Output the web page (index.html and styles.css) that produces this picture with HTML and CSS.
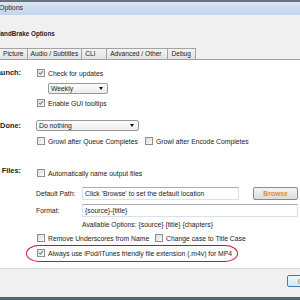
FILE: index.html
```html
<!DOCTYPE html>
<html lang="en">
<head>
    <meta charset="UTF-8">
    <title>HandBrake Options</title>
    <link rel="stylesheet" href="styles.css">
</head>
<body>
    <div class="window">
        <div class="titlebar"><span class="title">Options</span></div>

        <div class="header">
            <h1 class="header-title">HandBrake Options</h1>
        </div>

        <div class="tabs">
            <div class="tab tab-general">General</div>
            <div class="tab">Picture</div>
            <div class="tab">Audio / Subtitles</div>
            <div class="tab">CLI</div>
            <div class="tab">Advanced / Other</div>
            <div class="tab tab-debug">Debug</div>
        </div>

        <div class="panel">
            <div class="group">
                <div class="group-label">Launch:</div>
                <div class="group-body">
                    <label class="check">
                        <span class="box"><svg viewBox="0 0 8 8"><path d="M1.6 3.8 L3.2 5.8 L6.4 1.6"/></svg></span>
                        Check for updates
                    </label>
                    <div class="select select-weekly">Weekly<span class="arrow"></span></div>
                    <label class="check check-gap">
                        <span class="box"><svg viewBox="0 0 8 8"><path d="M1.6 3.8 L3.2 5.8 L6.4 1.6"/></svg></span>
                        Enable GUI tooltips
                    </label>
                </div>
            </div>

            <div class="group group-done">
                <div class="group-label label-select">When Done:</div>
                <div class="group-body">
                    <div class="select select-done">Do nothing<span class="arrow"></span></div>
                    <div class="check-row growl-row">
                        <label class="check check-first"><span class="box"></span>Growl after Queue Completes</label>
                        <label class="check"><span class="box"></span>Growl after Encode Completes</label>
                    </div>
                </div>
            </div>

            <div class="group group-files">
                <div class="group-label label-files">Output Files:</div>
                <div class="group-body">
                    <label class="check"><span class="box"></span>Automatically name output files</label>

                    <div class="field-row path-row">
                        <span class="field-label">Default Path:</span>
                        <div class="textbox textbox-path">Click 'Browse' to set the default location</div>
                        <button class="browse">Browse</button>
                    </div>
                    <div class="field-row format-row">
                        <span class="field-label">Format:</span>
                        <div class="textbox">{source}-{title}</div>
                    </div>
                    <div class="hint">Available Options: {source} {title} {chapters}</div>

                    <div class="check-row remove-row">
                        <label class="check check-wide"><span class="box"></span>Remove Underscores from Name</label>
                        <label class="check"><span class="box"></span>Change case to Title Case</label>
                    </div>
                    <div class="always-row">
                        <label class="check">
                            <span class="box"><svg viewBox="0 0 8 8"><path d="M1.6 3.8 L3.2 5.8 L6.4 1.6"/></svg></span>
                            Always use iPod/iTunes friendly file extension (.m4v) for MP4
                        </label>
                        <span class="highlight"></span>
                    </div>
                </div>
            </div>
        </div>

        <div class="footer">
            <button class="close-btn">Close</button>
        </div>
    </div>
</body>
</html>
```

FILE: styles.css
```css
* {
    margin: 0;
    padding: 0;
    box-sizing: border-box;
}

body {
    width: 300px;
    height: 300px;
    overflow: hidden;
    background-color: #f0f0f0;
    font-family: 'Liberation Sans', Arial, sans-serif;
    font-size: 6.8px;
    color: #222;
}

.window {
    margin-left: -40px;
    width: 345px;
    height: 300px;
    display: flex;
    flex-direction: column;
}

/* title bar */
.titlebar {
    height: 15px;
    border-top: 2px solid #6b747a;
    background: linear-gradient(#d9e6f5, #c1d5ee);
    padding-left: 39px;
    line-height: 12px;
    font-size: 7px;
    color: #2a2a2a;
}

/* header */
.header {
    height: 33px;
    padding: 14px 0 0 36px;
    background-color: #f0f0f0;
}

.header-title {
    font-size: 6.3px;
    font-weight: bold;
    line-height: 10px;
}

/* tabs */
.tabs {
    height: 11px;
    display: flex;
    padding-left: 2px;
}

.tab {
    min-width: 25px;
    height: 11px;
    padding: 0 3px;
    line-height: 10px;
    font-size: 6.6px;
    border: 1px solid #a3a3a3;
    border-bottom: none;
    border-left: none;
    background: linear-gradient(#f3f3f3, #e2e2e2);
    white-space: nowrap;
}

.tab-general {
    width: 38px;
    background: #fff;
}

.tab:nth-child(5) {
    padding-right: 5px;
}

.tab-debug {
    padding: 0 4px;
}

/* panel */
.panel {
    height: 209px;
    padding-top: 7px;
    border-top: 1px solid #a0a0a0;
    background-color: #fff;
}

.group {
    display: grid;
    grid-template-columns: 61px 1fr;
    column-gap: 15px;
}

.group-label {
    text-align: right;
    font-weight: bold;
    font-size: 7.4px;
    line-height: 12px;
    white-space: nowrap;
}

.label-select {
    line-height: 11px;
}

.label-files {
    margin-top: -2px;
}

.group-done {
    margin-top: 11px;
}

.group-files {
    margin-top: 20px;
}

.group-body {
    display: flex;
    flex-direction: column;
    align-items: flex-start;
}

/* checkboxes */
.check {
    display: flex;
    align-items: center;
    gap: 3px;
    height: 12px;
    padding-left: 1px;
    white-space: nowrap;
}

.check-gap {
    margin-top: 3px;
}

.box {
    width: 8px;
    height: 8px;
    flex: none;
    border: 1px solid #8e8f8f;
    background: linear-gradient(135deg, #dcdcdc, #fbfbfb);
}

.box svg {
    display: block;
    width: 6px;
    height: 6px;
}

.box path {
    fill: none;
    stroke: #3d4f7d;
    stroke-width: 1.3;
}

.check-row {
    display: flex;
}

.growl-row {
    margin-top: 4px;
}

.check-first {
    width: 108px;
}

.check-wide {
    width: 118px;
}

/* dropdowns */
.select {
    position: relative;
    height: 11px;
    padding-left: 2px;
    line-height: 9px;
    border: 1px solid #9a9a9a;
    border-radius: 2px;
    background: linear-gradient(#fdfdfd, #ececec);
}

.select-weekly {
    width: 60px;
    margin: 4px 0 0 12px;
}

.select-done {
    width: 103px;
}

.arrow {
    position: absolute;
    right: 4px;
    top: 3px;
    border-left: 2.5px solid transparent;
    border-right: 2.5px solid transparent;
    border-top: 3px solid #111;
}

/* text fields */
.field-row {
    display: flex;
    align-items: center;
    height: 13px;
}

.path-row {
    margin-top: 8px;
}

.format-row {
    margin-top: 4px;
}

.field-label {
    width: 46px;
    flex: none;
}

.textbox {
    width: 216px;
    height: 13px;
    padding-left: 2px;
    line-height: 11px;
    border: 1px solid #dbdfe6;
    border-top-color: #abadb3;
    background-color: #fff;
    white-space: nowrap;
}

.textbox-path {
    width: 157px;
}

.browse {
    width: 45px;
    height: 13px;
    margin-left: 14px;
    font-family: inherit;
    font-size: 6.8px;
    font-weight: bold;
    color: #e8892a;
    border: 1px solid #8a8a8a;
    border-radius: 2px;
    background: linear-gradient(#f4f4f4, #dcdcdc);
}

.hint {
    margin-top: 3px;
    padding-left: 46px;
    line-height: 10px;
}

.remove-row {
    margin-top: 2px;
}

.always-row {
    position: relative;
    margin-top: 3px;
}

.highlight {
    position: absolute;
    left: -10px;
    top: -2px;
    width: 212px;
    height: 17px;
    border: 1.5px solid #c8142f;
    border-radius: 14px / 9px;
}

/* footer */
.footer {
    flex: 1;
    padding: 6px 0 0 327px;
    background-color: #f0f0f0;
    border-top: 1px solid #dadada;
    border-bottom: 3px solid #4d6a70;
}

.close-btn {
    width: 40px;
    height: 12px;
    font-family: inherit;
    font-size: 6.8px;
    font-weight: bold;
    color: #e8892a;
    border: 1px solid #3c7fb1;
    border-radius: 2px;
    background: linear-gradient(#eaf6fd, #d2ebf8);
}
```
